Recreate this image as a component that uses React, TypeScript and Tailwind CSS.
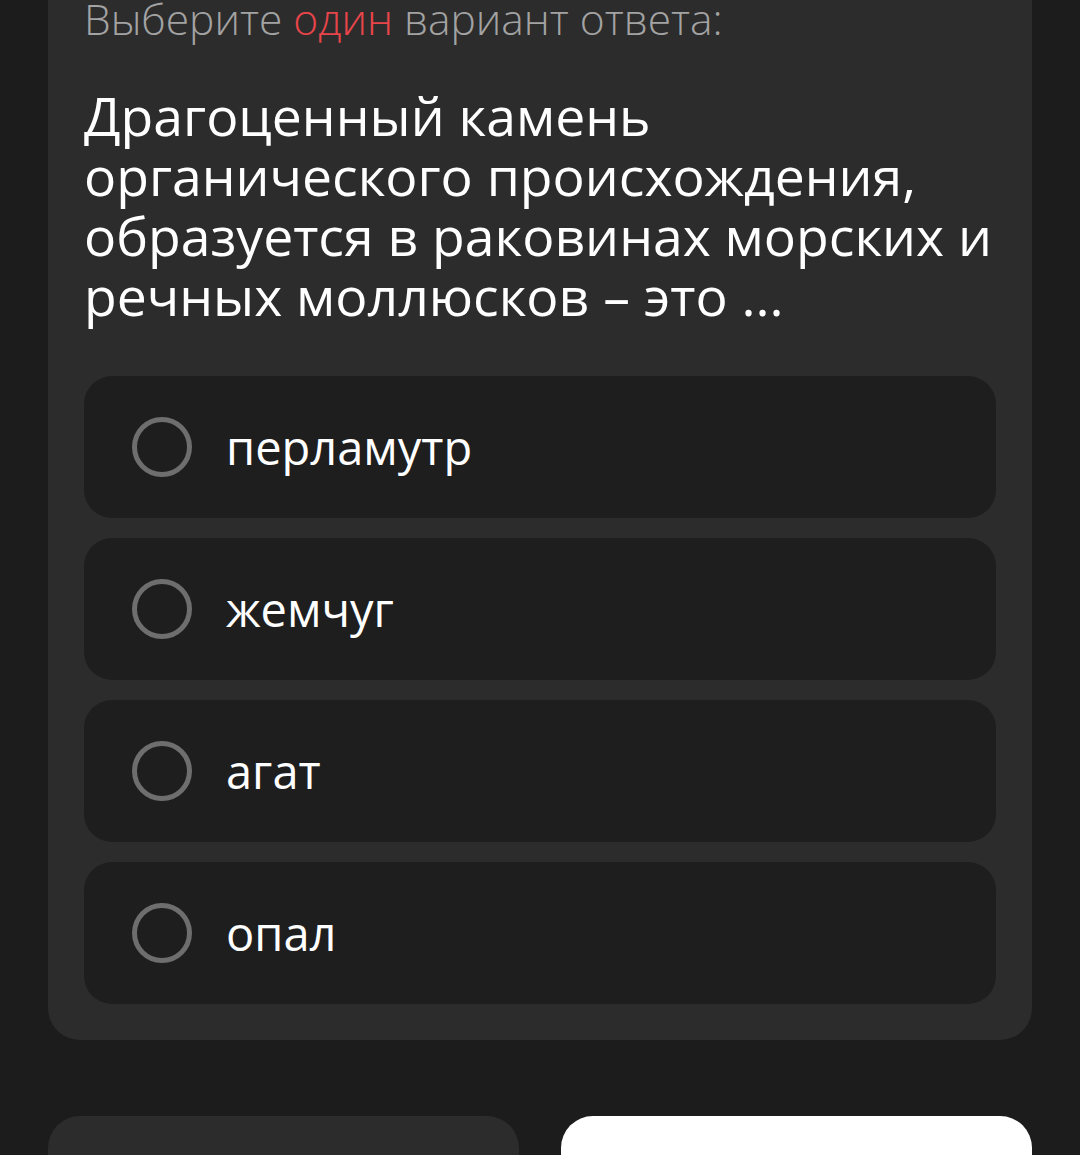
const options = ["перламутр", "жемчуг", "агат", "опал"];

export default function App() {
  return (
    <div
      className="min-h-[1155px] bg-[#1c1c1c] px-12 overflow-hidden"
      style={{ fontFamily: '"Open Sans", "Noto Sans", sans-serif' }}
    >
      <div className="-mt-[40px] rounded-[32px] bg-[#2c2c2c] px-9 pt-[35px] pb-9">
        <p className="text-[42.5px] leading-[48px] font-light text-[#a3a3a3] whitespace-nowrap">
          Выберите <span className="text-[#e8454a]">один</span> вариант ответа:
        </p>
        <h1 className="mt-[43px] text-[53.5px] leading-[60px] font-medium text-white whitespace-nowrap">
          Драгоценный камень
          <br />
          органического происхождения,
          <br />
          образуется в раковинах морских и
          <br />
          речных моллюсков – это ...
        </h1>
        <div className="mt-[50px] flex flex-col gap-5">
          {options.map((o) => (
            <label
              key={o}
              className="flex h-[142px] items-center gap-[34px] rounded-[28px] bg-[#1e1e1e] pl-[48px]"
            >
              <span className="h-[60px] w-[60px] shrink-0 rounded-full border-[5px] border-[#6e6e6e]" />
              <span className="text-[47px] text-white">{o}</span>
            </label>
          ))}
        </div>
      </div>
      <div className="mt-[76px] grid grid-cols-2 gap-[42px]">
        <button className="h-[120px] rounded-[32px] bg-[#2c2c2c]" />
        <button className="h-[120px] rounded-[32px] bg-white" />
      </div>
    </div>
  );
}
